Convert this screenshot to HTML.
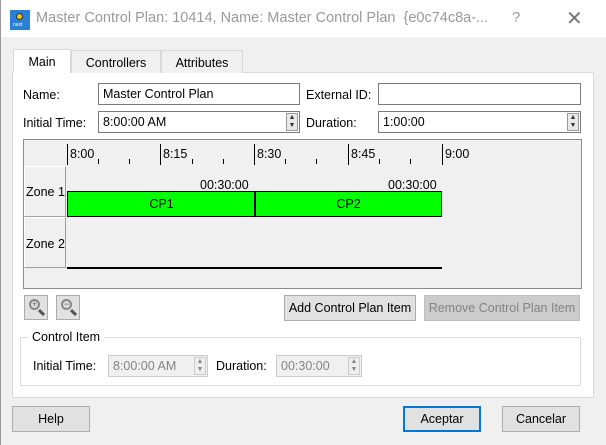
<!DOCTYPE html><html><head><style>
*{margin:0;padding:0;box-sizing:border-box}
body{width:606px;height:445px;overflow:hidden;background:#f0f0f0;font-family:"Liberation Sans",sans-serif;font-size:12px;color:#000;position:relative}
.a{position:absolute}
.inp{position:absolute;background:#fff;border:1px solid #7a7a7a;height:22px;padding:3px 4px;font-size:12.5px}
.spin{position:absolute;width:12px;height:18px;border:1px solid #999;background:#e8e8e8;top:1px;right:1px;font-size:7px;line-height:8px;text-align:center;color:#333}
.btn{position:absolute;background:#e1e1e1;border:1px solid #adadad;text-align:center;font-size:12.5px;line-height:24px}
.tab{position:absolute;top:50px;height:23px;border:1px solid #d9d9d9;border-bottom:none;background:#f0f0f0;text-align:center;line-height:24px;font-size:12.5px}
.lbl{position:absolute;font-size:12.5px}
</style></head><body>
<div class="a" style="left:0;top:0;width:606px;height:37px;background:#fff;border-left:1px solid #999"></div>
<div class="a" style="left:10px;top:10px;width:20px;height:20px;background:#2b7fd4"><div class="a" style="left:6px;top:3px;width:7px;height:7px;border-radius:50%;background:#f5c400;border:1.5px solid #333"></div><div class="a" style="left:3px;top:12px;font-size:5px;color:#fff">next</div></div>
<div class="a" style="left:36px;top:10px;font-size:14.5px;color:#999">Master Control Plan: 10414, Name: Master Control Plan&nbsp; {e0c74c8a-...</div>
<div class="a" style="left:512px;top:9px;font-size:15px;color:#999">?</div>
<div class="a" style="left:566px;top:6px;font-size:20px;color:#777">✕</div>
<div class="a" style="left:0;top:37px;width:1px;height:408px;background:#999"></div>
<div class="a" style="left:12px;top:72px;width:582px;height:326px;background:#fff;border:1px solid #d9d9d9"></div>
<div class="tab" style="left:13px;top:49px;width:58px;height:24px;background:#fff">Main</div>
<div class="tab" style="left:71px;width:90px">Controllers</div>
<div class="tab" style="left:161px;width:82px">Attributes</div>
<div class="lbl" style="left:23px;top:88px">Name:</div>
<div class="inp" style="left:98px;top:83px;width:202px">Master Control Plan</div>
<div class="lbl" style="left:306px;top:88px">External ID:</div>
<div class="inp" style="left:378px;top:83px;width:203px"></div>
<div class="lbl" style="left:23px;top:116px">Initial Time:</div>
<div class="inp" style="left:98px;top:111px;width:202px">8:00:00 AM<div class="spin">▲<br>▼</div></div>
<div class="lbl" style="left:306px;top:116px">Duration:</div>
<div class="inp" style="left:378px;top:111px;width:203px">1:00:00<div class="spin">▲<br>▼</div></div>
<div class="a" style="left:23px;top:139px;width:559px;height:150px;background:#f0f0f0;border:1px solid #8c8c8c"></div>
<div class="a" style="left:24px;top:166px;width:42px;height:51px;border:1px solid #a0a0a0;border-top-color:#fff;border-left-color:#fff"></div>
<div class="a" style="left:24px;top:217px;width:42px;height:51px;border:1px solid #a0a0a0;border-top-color:#fff;border-left-color:#fff"></div>
<div class="lbl" style="left:26px;top:185px">Zone 1</div>
<div class="lbl" style="left:26px;top:237px">Zone 2</div>
<div class="a" style="left:67px;top:144px;width:1px;height:21px;background:#000"></div>
<div class="a" style="left:160px;top:144px;width:1px;height:21px;background:#000"></div>
<div class="a" style="left:254px;top:144px;width:1px;height:21px;background:#000"></div>
<div class="a" style="left:348px;top:144px;width:1px;height:21px;background:#000"></div>
<div class="a" style="left:442px;top:144px;width:1px;height:21px;background:#000"></div>
<div class="lbl" style="left:70px;top:147px">8:00</div>
<div class="lbl" style="left:163px;top:147px">8:15</div>
<div class="lbl" style="left:257px;top:147px">8:30</div>
<div class="lbl" style="left:351px;top:147px">8:45</div>
<div class="lbl" style="left:445px;top:147px">9:00</div>
<div class="a" style="left:98px;top:159px;width:1px;height:5px;background:#000"></div>
<div class="a" style="left:129px;top:159px;width:1px;height:5px;background:#000"></div>
<div class="a" style="left:192px;top:159px;width:1px;height:5px;background:#000"></div>
<div class="a" style="left:223px;top:159px;width:1px;height:5px;background:#000"></div>
<div class="a" style="left:285px;top:159px;width:1px;height:5px;background:#000"></div>
<div class="a" style="left:316px;top:159px;width:1px;height:5px;background:#000"></div>
<div class="a" style="left:379px;top:159px;width:1px;height:5px;background:#000"></div>
<div class="a" style="left:410px;top:159px;width:1px;height:5px;background:#000"></div>
<div class="lbl" style="left:200px;top:178px">00:30:00</div>
<div class="lbl" style="left:388px;top:178px">00:30:00</div>
<div class="a" style="left:67px;top:191px;width:189px;height:26px;background:#00ff00;border:1px solid #000;text-align:center;line-height:24px;font-size:12.5px">CP1</div>
<div class="a" style="left:254px;top:191px;width:188px;height:26px;background:#00ff00;border:1px solid #000;border-left:2px solid #000;text-align:center;line-height:24px;font-size:12.5px">CP2</div>
<div class="a" style="left:67px;top:267px;width:375px;height:2px;background:#000"></div>
<div class="a" style="left:24px;top:295px;width:24px;height:25px;background:#e1e1e1;border:1px solid #adadad"><div class="a" style="left:4px;top:3px;width:11px;height:11px;border-radius:50%;border:2px solid #888;background:#ddd;font-size:9px;line-height:7px;text-align:center;color:#666">+</div><div class="a" style="left:13px;top:15px;width:7px;height:3px;background:#555;transform:rotate(45deg)"></div></div>
<div class="a" style="left:56px;top:295px;width:24px;height:25px;background:#e1e1e1;border:1px solid #adadad"><div class="a" style="left:4px;top:3px;width:11px;height:11px;border-radius:50%;border:2px solid #888;background:#ddd;font-size:9px;line-height:7px;text-align:center;color:#666">−</div><div class="a" style="left:13px;top:15px;width:7px;height:3px;background:#555;transform:rotate(45deg)"></div></div>
<div class="btn" style="left:284px;top:295px;width:132px;height:26px">Add Control Plan Item</div>
<div class="btn" style="left:424px;top:295px;width:156px;height:26px;background:#cccccc;border-color:#bfbfbf;color:#838383">Remove Control Plan Item</div>
<div class="a" style="left:20px;top:337px;width:561px;height:49px;border:1px solid #dcdcdc"></div>
<div class="lbl" style="left:28px;top:330px;background:#fff;padding:0 4px">Control Item</div>
<div class="lbl" style="left:33px;top:359px">Initial Time:</div>
<div class="inp" style="left:108px;top:355px;width:100px;background:#f0f0f0;border-color:#ccc;color:#838383">8:00:00 AM<div class="spin" style="background:#eee;border-color:#ccc;color:#888">▲<br>▼</div></div>
<div class="lbl" style="left:216px;top:359px">Duration:</div>
<div class="inp" style="left:276px;top:355px;width:86px;background:#f0f0f0;border-color:#ccc;color:#838383">00:30:00<div class="spin" style="background:#eee;border-color:#ccc;color:#888">▲<br>▼</div></div>
<div class="btn" style="left:12px;top:406px;width:78px;height:26px">Help</div>
<div class="btn" style="left:403px;top:406px;width:78px;height:26px;border:2px solid #0078d7;line-height:22px">Aceptar</div>
<div class="btn" style="left:502px;top:406px;width:78px;height:26px">Cancelar</div>
</body></html>
